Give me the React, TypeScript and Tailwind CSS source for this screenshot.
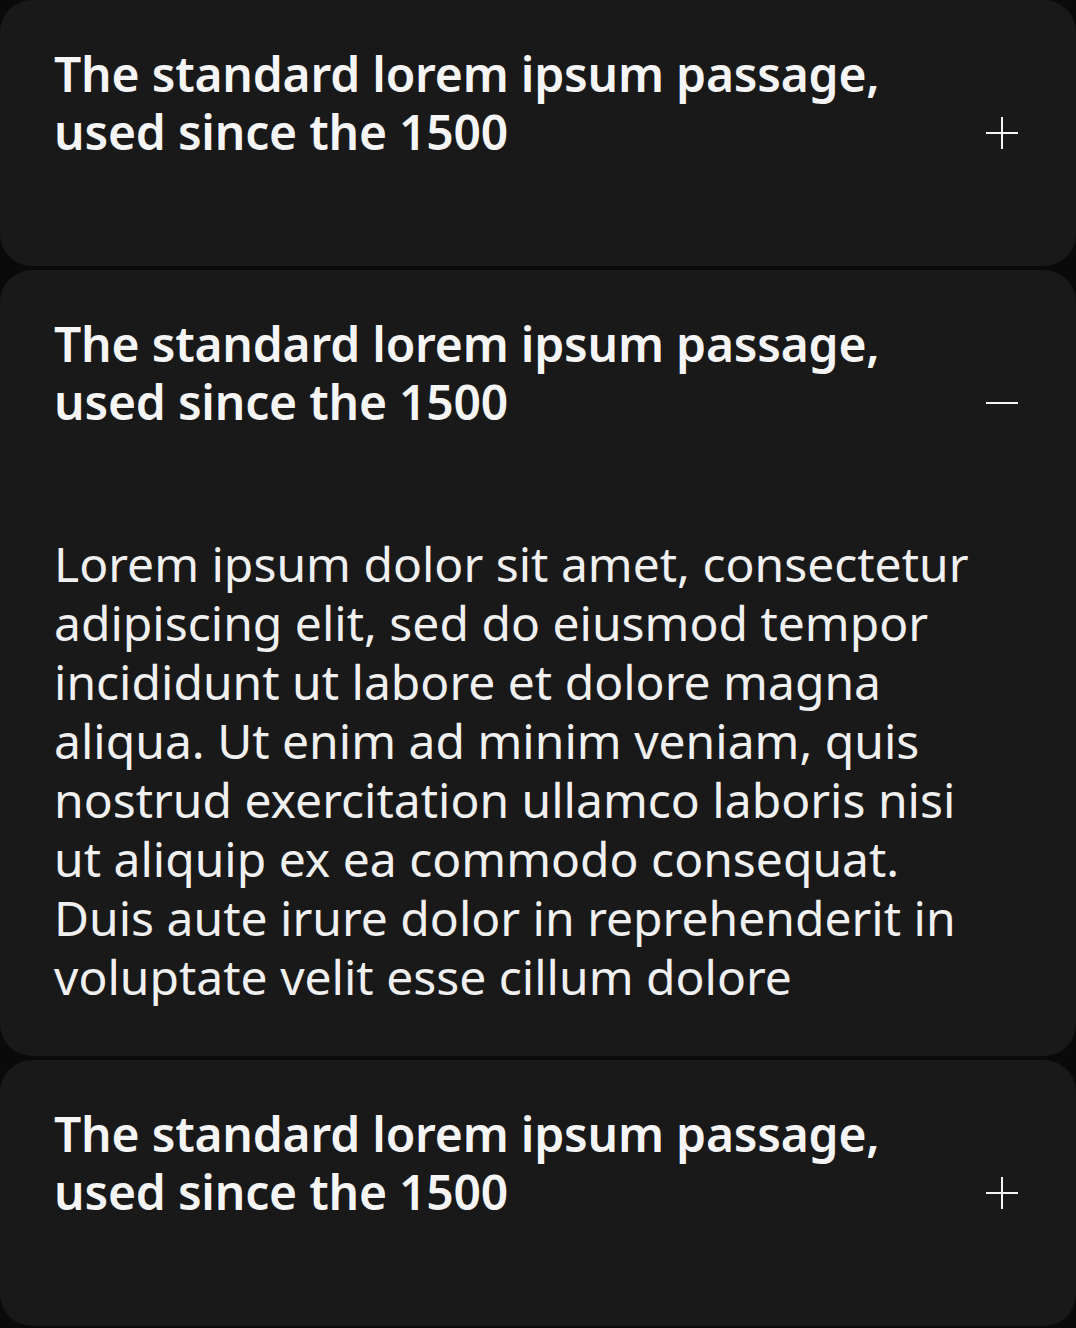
import React from "react";

const title = ["The standard lorem ipsum passage,", "used since the 1500"];

const body = [
  "Lorem ipsum dolor sit amet, consectetur",
  "adipiscing elit, sed do eiusmod tempor",
  "incididunt ut labore et dolore magna",
  "aliqua. Ut enim ad minim veniam, quis",
  "nostrud exercitation ullamco laboris nisi",
  "ut aliquip ex ea commodo consequat.",
  "Duis aute irure dolor in reprehenderit in",
  "voluptate velit esse cillum dolore",
];

const PlusIcon = ({ open }: { open: boolean }) => (
  <svg width="32" height="32" viewBox="0 0 32 32" fill="none" className="shrink-0">
    <path d="M0 16h32" stroke="#f5f5f5" strokeWidth="2" />
    {!open && <path d="M16 0v32" stroke="#f5f5f5" strokeWidth="2" />}
  </svg>
);

const Item = ({ open }: { open: boolean }) => {
  return (
    <div className="bg-[#191919] rounded-[32px] pl-[54px] pr-[58px] pt-[45px]">
      <div className="flex justify-between items-start">
        <h2 className="font-semibold text-[48px] leading-[58px] tracking-[-0.2px] text-[#f5f5f5]">
          {title.map((t) => (
            <span key={t} className="block whitespace-nowrap">
              {t}
            </span>
          ))}
        </h2>
        <div className="mt-[72px]">
          <PlusIcon open={open} />
        </div>
      </div>
      {open ? (
        <p className="mt-[103px] pb-[50px] text-[48px] leading-[59px] text-[#f0f0f0]">
          {body.map((t) => (
            <span key={t} className="block whitespace-nowrap">
              {t}
            </span>
          ))}
        </p>
      ) : (
        <div className="h-[105px]" />
      )}
    </div>
  );
};

export default function App() {
  return (
    <div className="min-h-screen bg-[#0a0a0a] flex flex-col gap-1 font-['Noto_Sans',sans-serif]">
      <Item open={false} />
      <Item open={true} />
      <Item open={false} />
    </div>
  );
}
